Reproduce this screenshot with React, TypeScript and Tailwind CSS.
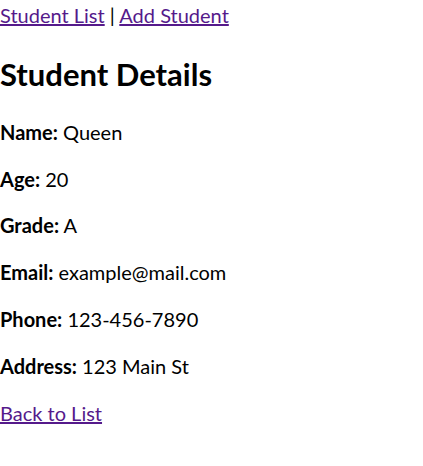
import React from "react";

const fields: [string, string][] = [
  ["Name", "Queen"],
  ["Age", "20"],
  ["Grade", "A"],
  ["Email", "example@mail.com"],
  ["Phone", "123-456-7890"],
  ["Address", "123 Main St"],
];

export default function App() {
  return (
    <div className="bg-white text-black text-[20px] leading-[26.8px] font-['Lato',sans-serif] pt-[2px] min-h-screen">
      <nav>
        <a href="#" className="text-[#551a8b] underline">
          Student List
        </a>{" "}
        |{" "}
        <a href="#" className="text-[#551a8b] underline">
          Add Student
        </a>
      </nav>
      <h2 className="text-[31px] leading-[40px] font-bold mt-[25px] mb-[25px]">
        Student Details
      </h2>
      {fields.map(([label, value]) => (
        <p key={label} className="mb-[20px]">
          <strong className="font-bold">{label}:</strong> {value}
        </p>
      ))}
      <a href="#" className="text-[#551a8b] underline">
        Back to List
      </a>
    </div>
  );
}
